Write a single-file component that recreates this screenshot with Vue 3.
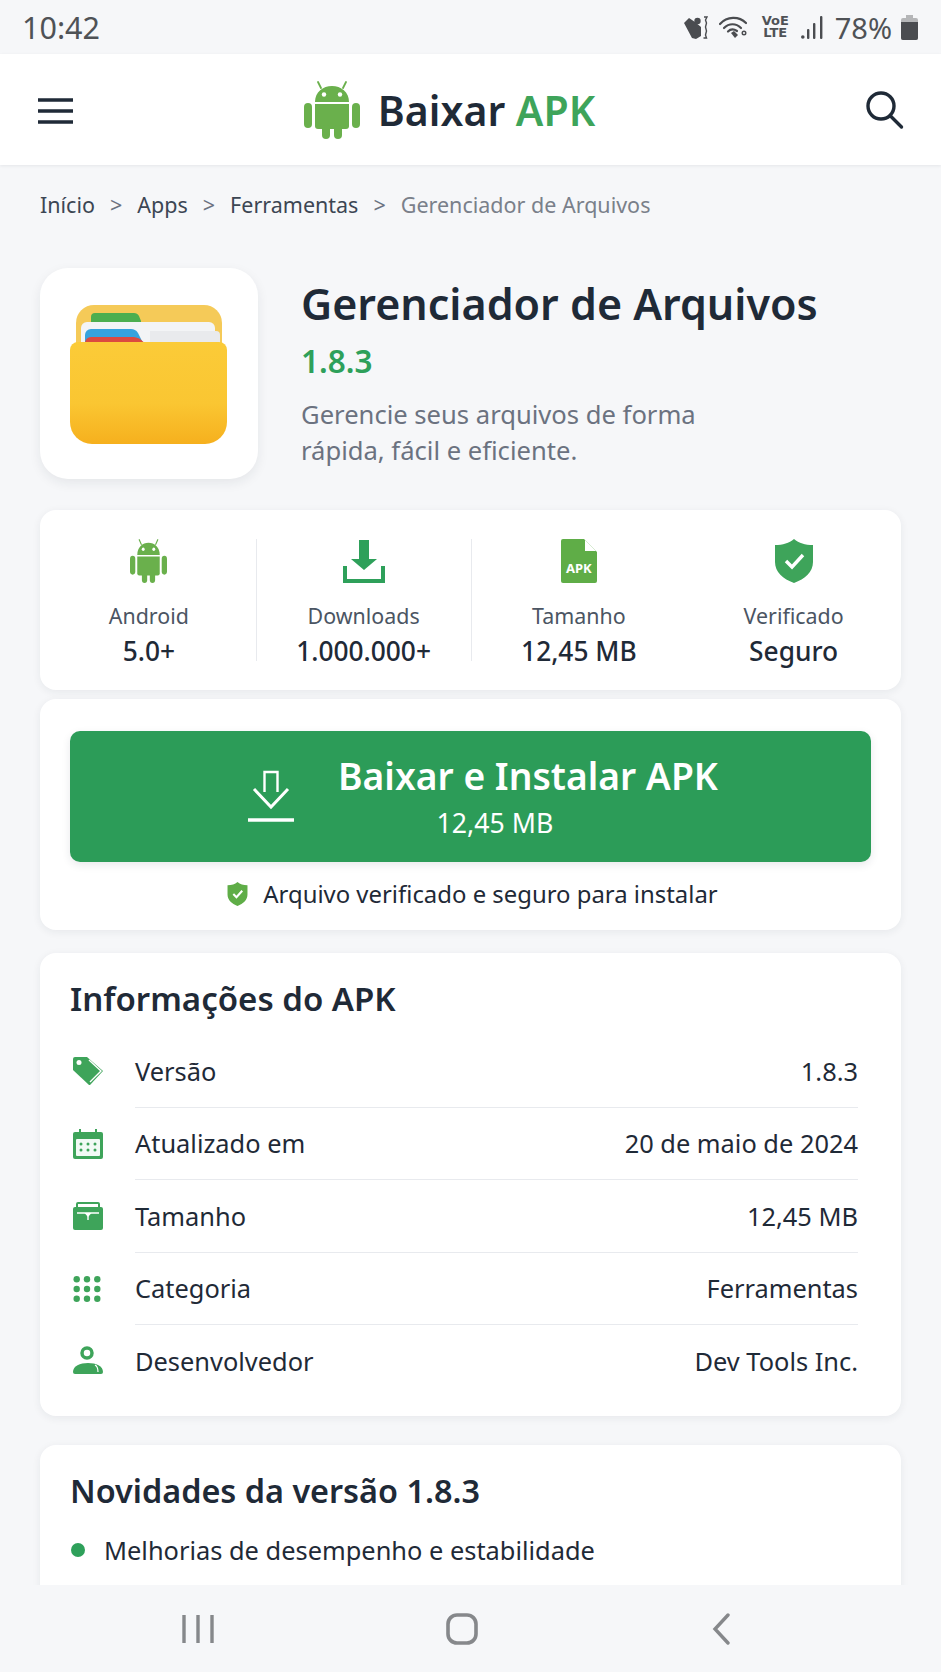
<template>
  <div class="phone">
    <div class="status-bar">
      <span class="clock">10:42</span>
      <div class="status-icons">
        <svg class="st-mute" width="24" height="23" viewBox="0 0 24 23" fill="#4a4c50">
          <path d="M0 7 5 2l6 4 6 5v9l-5 3-4-1z" />
          <circle cx="13.500" cy="5" r="3.200" />
          <path d="M20 1h3l-1.500 3 1 3-1 4 1 4-1 4 1 3h-3" fill="none" stroke="#4a4c50" stroke-width="1.400" />
        </svg>
        <svg class="st-wifi" width="28" height="23" viewBox="0 0 28 23" fill="none" stroke="#4a4c50" stroke-width="2.200" stroke-linecap="round">
          <path d="M1 8C8 0 20 0 27 7" />
          <path d="M5 12c5-5 12-5 17 0" />
          <path d="M9 15.500c2.500-2.500 6-2.500 9-.5" />
          <path d="m12 17 3-2 4 4-3 3z" fill="#4a4c50" stroke="none" />
          <circle cx="25" cy="17" r="1.800" stroke-width="1.400" />
        </svg>
        <span class="volte">VoE<br />LTE</span>
        <svg class="st-signal" width="22" height="23" viewBox="0 0 22 23" fill="#4a4c50">
          <circle cx="1.800" cy="21" r="1.800" />
          <rect x="6" y="13" width="2.400" height="10" rx="1" />
          <rect x="12" y="7" width="2.400" height="16" rx="1" />
          <rect x="19" y="0" width="2.400" height="23" rx="1" />
        </svg>
        <span class="battery-text">78%</span>
        <svg width="17" height="25" viewBox="0 0 17 25">
          <path d="M5 0h7v3h3a2 2 0 0 1 2 2v18a2 2 0 0 1-2 2H2a2 2 0 0 1-2-2V5a2 2 0 0 1 2-2h3z" fill="#b5b6b8" />
          <path d="M0 7h17v16a2 2 0 0 1-2 2H2a2 2 0 0 1-2-2z" fill="#4a4c50" />
        </svg>
      </div>
    </div>

    <header class="top-bar">
      <svg class="menu-icon" width="38" height="28" viewBox="0 0 38 28" fill="none" stroke="#1f2a37" stroke-width="3.400">
        <path d="M1 3h35M1 14h35M1 25h35" />
      </svg>
      <div class="brand">
        <svg width="56" height="58" viewBox="0 0 56 58">
          <use href="#droid" />
        </svg>
        <span class="brand-name">Baixar <b>APK</b></span>
      </div>
      <svg width="40" height="40" viewBox="0 0 40 40" fill="none" stroke="#1f2a37" stroke-width="3.400" stroke-linecap="round">
        <circle cx="17" cy="16" r="13" />
        <path d="m26.500 26 11 11" />
      </svg>
    </header>

    <svg class="defs" width="0" height="0">
      <symbol id="droid" viewBox="0 0 56 58">
        <path d="M17 7 14 1M39 7l3-6" stroke="#6ab04c" stroke-width="1.800" stroke-linecap="round" fill="none" />
        <path d="M11 21C11 11 19 5 28 5s17 6 17 16z" fill="#6ab04c" />
        <circle cx="20" cy="13.500" r="2.200" fill="#fff" />
        <circle cx="36" cy="13.500" r="2.200" fill="#fff" />
        <path d="M11 23h34v22a3 3 0 0 1-3 3H14a3 3 0 0 1-3-3z" fill="#6ab04c" />
        <rect x="0" y="22" width="8" height="25" rx="4" fill="#6ab04c" />
        <rect x="48" y="22" width="8" height="25" rx="4" fill="#6ab04c" />
        <rect x="18" y="44" width="8" height="14" rx="4" fill="#6ab04c" />
        <rect x="30" y="44" width="8" height="14" rx="4" fill="#6ab04c" />
      </symbol>
    </svg>

    <main class="content">
      <nav class="crumbs">
        <span>Início</span><i>&gt;</i><span>Apps</span><i>&gt;</i><span>Ferramentas</span><i>&gt;</i>
        <span class="current">Gerenciador de Arquivos</span>
      </nav>

      <section class="app-head">
        <div class="app-icon">
          <svg class="folder" width="157" height="139" viewBox="0 0 157 139">
            <defs>
              <linearGradient id="folder" x1="0" y1="0" x2="0" y2="1">
                <stop offset="0" stop-color="#fbcb38" />
                <stop offset="0.6" stop-color="#fac632" />
                <stop offset="1" stop-color="#f6b01e" />
              </linearGradient>
            </defs>
            <path d="M6 40V18A18 18 0 0 1 24 0h110a18 18 0 0 1 18 18v22z" fill="#f5ca58" />
            <path d="M21 30V12a4 4 0 0 1 4-4h39c2 0 4 1 5 3l2 5v14z" fill="#4cae4f" />
            <path d="M11 40V23a6 6 0 0 1 6-6h122a6 6 0 0 1 6 6v17z" fill="#f3f4f6" />
            <path d="M80 40V26h66a4 4 0 0 1 4 4v10z" fill="#e9eaed" />
            <path d="M15 40V30a6 6 0 0 1 6-6h40c3 0 5 1 7 4l6 12z" fill="#36a3dd" />
            <path d="M15 40v-2a6 6 0 0 1 6-6h42c3 0 5 1 7 2l7 6z" fill="#dc4a3f" />
            <path d="M0 45a8 8 0 0 1 8-8h141a8 8 0 0 1 8 8v72a22 22 0 0 1-22 22H22A22 22 0 0 1 0 117z" fill="url(#folder)" />
          </svg>
        </div>
        <div class="app-meta">
          <h1>Gerenciador de Arquivos</h1>
          <div class="app-version">1.8.3</div>
          <p>Gerencie seus arquivos de forma<br />rápida, fácil e eficiente.</p>
        </div>
      </section>

      <section class="card stats">
        <div class="stat">
          <svg width="37" height="44" viewBox="0 0 56 58" preserveAspectRatio="none"><use href="#droid" /></svg>
          <span class="stat-label">Android</span>
          <strong>5.0+</strong>
        </div>
        <div class="stat">
          <svg width="42" height="44" viewBox="0 0 42 44">
            <path d="M16 1h10v19h8L21 31 8 20h8z" fill="#2ea05a" />
            <path d="M2 27v15h38V27" fill="none" stroke="#2ea05a" stroke-width="4" />
          </svg>
          <span class="stat-label">Downloads</span>
          <strong>1.000.000+</strong>
        </div>
        <div class="stat">
          <div class="file-icon">
            <svg width="36" height="44" viewBox="0 0 36 44">
              <path d="M2 0h21l13 13v29a2 2 0 0 1-2 2H2a2 2 0 0 1-2-2V2a2 2 0 0 1 2-2z" fill="#5fad47" />
              <path d="M24 1v11h11z" fill="#fff" />
            </svg>
            <span>APK</span>
          </div>
          <span class="stat-label">Tamanho</span>
          <strong>12,45 MB</strong>
        </div>
        <div class="stat">
          <svg width="40" height="44" viewBox="0 0 40 44">
            <path d="M20 0c5 4 11 6 19 6v17c0 10-8 17-19 21C9 40 1 33 1 23V6c8 0 14-2 19-6z" fill="#3ea45a" />
            <path d="m12 22 6 6 11-12" fill="none" stroke="#fff" stroke-width="3.400" />
          </svg>
          <span class="stat-label">Verificado</span>
          <strong>Seguro</strong>
        </div>
      </section>

      <section class="card download">
        <button class="download-btn">
          <svg width="46" height="54" viewBox="0 0 46 54" fill="none" stroke="#fff" stroke-width="3">
            <path d="M16.500 22V2h13v20" stroke-width="2.400" />
            <path d="M6 19 23 37 40 19" />
            <path d="M0 50h46" stroke-width="3.600" />
          </svg>
          <span class="btn-text">
            <span class="btn-title">Baixar e Instalar APK</span>
            <span class="btn-size">12,45 MB</span>
          </span>
        </button>
        <div class="verified">
          <svg width="21" height="24" viewBox="0 0 40 44" preserveAspectRatio="none">
            <path d="M20 0c5 4 11 6 19 6v17c0 10-8 17-19 21C9 40 1 33 1 23V6c8 0 14-2 19-6z" fill="#5fad47" />
            <path d="m12 22 6 6 11-12" fill="none" stroke="#fff" stroke-width="4" />
          </svg>
          Arquivo verificado e seguro para instalar
        </div>
      </section>

      <section class="card info">
        <h2>Informações do APK</h2>
        <div class="info-row" v-for="row in rows" :key="row.label">
          <span class="info-icon" v-html="row.icon"></span>
          <div class="info-line">
            <span>{{ row.label }}</span>
            <span>{{ row.value }}</span>
          </div>
        </div>
      </section>

      <section class="card news">
        <h2>Novidades da versão 1.8.3</h2>
        <ul>
          <li>Melhorias de desempenho e estabilidade</li>
        </ul>
      </section>
    </main>

    <footer class="nav-bar">
      <svg width="34" height="30" viewBox="0 0 34 30" stroke="#86888b" stroke-width="3.400">
        <path d="M2 1v28M16 1v28M30 1v28" />
      </svg>
      <svg width="32" height="32" viewBox="0 0 32 32" fill="none" stroke="#86888b" stroke-width="3.600">
        <rect x="2" y="2" width="28" height="28" rx="9" />
      </svg>
      <svg class="back-icon" width="20" height="32" viewBox="0 0 20 32" fill="none" stroke="#86888b" stroke-width="3.400" stroke-linecap="round">
        <path d="M18 2 5 16l13 14" />
      </svg>
    </footer>
  </div>
</template>

<script setup>
const rows = [
  {
    label: 'Versão',
    value: '1.8.3',
    icon: '<svg width="30" height="28" viewBox="0 0 30 28"><path d="M0 2a2 2 0 0 1 2-2h12l16 14-13 14h-1L0 13z" fill="#3ea45a"/><circle cx="6" cy="5.500" r="2.500" fill="#fff"/><path d="m16 3 12 11-11 11" fill="none" stroke="#fff" stroke-width="1.400"/></svg>'
  },
  {
    label: 'Atualizado em',
    value: '20 de maio de 2024',
    icon: '<svg width="30" height="30" viewBox="0 0 30 30"><path d="M2 3h26a2 2 0 0 1 2 2v23a2 2 0 0 1-2 2H2a2 2 0 0 1-2-2V5a2 2 0 0 1 2-2z" fill="#3ea45a"/><rect x="3" y="10" width="24" height="17" rx="1" fill="#f2faf5"/><path d="M7 0v7M23 0v7" stroke="#3ea45a" stroke-width="2"/><g fill="#3ea45a"><circle cx="8" cy="15" r="1.500"/><circle cx="15" cy="15" r="1.500"/><circle cx="22" cy="15" r="1.500"/><circle cx="8" cy="21" r="1.500"/><circle cx="15" cy="21" r="1.500"/><circle cx="22" cy="21" r="1.500"/></g></svg>'
  },
  {
    label: 'Tamanho',
    value: '12,45 MB',
    icon: '<svg width="30" height="28" viewBox="0 0 30 28"><path d="M4 6V2a1 1 0 0 1 1-1h20a1 1 0 0 1 1 1v4" fill="none" stroke="#3ea45a" stroke-width="2"/><path d="M2 5h26a2 2 0 0 1 2 2v19a2 2 0 0 1-2 2H2a2 2 0 0 1-2-2V7a2 2 0 0 1 2-2z" fill="#3ea45a"/><path d="M4 11h22M15 11v7" stroke="#fff" stroke-width="1.400"/><path d="M11.500 11h7l-3.500 4z" fill="#fff"/></svg>'
  },
  {
    label: 'Categoria',
    value: 'Ferramentas',
    icon: '<svg width="28" height="26" viewBox="0 0 28 26" fill="#3ea45a"><circle cx="3.700" cy="3.300" r="3.200"/><circle cx="14" cy="3.300" r="3.200"/><circle cx="24.300" cy="3.300" r="3.200"/><circle cx="3.700" cy="13" r="3.200"/><circle cx="14" cy="13" r="3.200"/><circle cx="24.300" cy="13" r="3.200"/><circle cx="3.700" cy="22.700" r="3.200"/><circle cx="14" cy="22.700" r="3.200"/><circle cx="24.300" cy="22.700" r="3.200"/></svg>'
  },
  {
    label: 'Desenvolvedor',
    value: 'Dev Tools Inc.',
    icon: '<svg width="30" height="29" viewBox="0 0 30 29"><circle cx="14" cy="7" r="5" fill="none" stroke="#3ea45a" stroke-width="3.500"/><path d="M0 26c0-6 7-9 15-9s15 3 15 9a2 2 0 0 1-2 2H2a2 2 0 0 1-2-2z" fill="#3ea45a"/><path d="M22 19c2 1 3 3 3 7" fill="none" stroke="#fff" stroke-width="1.200"/></svg>'
  }
]
</script>

<style>
body {
  background: #f6f7f9;
}
</style>

<style scoped>
.phone {
  width: 941px;
  height: 1672px;
  display: flex;
  flex-direction: column;
  overflow: hidden;
  background: #f6f7f9;
  font-family: "Noto Sans", "Open Sans", sans-serif;
  color: #1f2a37;
}

.defs {
  position: absolute;
}

.status-bar {
  height: 54px;
  flex: none;
  display: flex;
  align-items: center;
  justify-content: space-between;
  padding: 0 23px 0 22px;
  box-sizing: border-box;
  color: #4f5256;
}

.clock {
  font-size: 30.500px;
}

.status-icons {
  display: flex;
  align-items: center;
}

.st-mute {
  margin-right: 11px;
}

.st-wifi {
  margin-right: 14px;
}

.volte {
  width: 29px;
  margin-right: 11px;
  font-size: 13px;
  font-weight: 700;
  line-height: 12px;
  text-align: center;
  font-family: "DejaVu Sans", sans-serif;
}

.st-signal {
  margin-right: 12px;
}

.battery-text {
  margin-right: 9px;
  font-size: 29px;
  line-height: 1;
}

.top-bar {
  height: 111px;
  flex: none;
  background: #fff;
  display: flex;
  align-items: center;
  justify-content: space-between;
  padding: 0 37px;
  box-sizing: border-box;
  box-shadow: 0 1px 3px rgba(31, 42, 55, 0.08);
  position: relative;
}

.menu-icon {
  margin-top: 2px;
}

.brand {
  display: flex;
  align-items: center;
  gap: 18px;
  margin-right: 40px;
}

.brand-name {
  margin-top: 2px;
  font-size: 41px;
  font-weight: 600;
  line-height: 1;
}

.brand-name b {
  font-weight: 600;
  color: #3ea45a;
}

.content {
  flex: 1;
  min-height: 0;
  overflow: hidden;
  padding: 0 40px;
  display: flex;
  flex-direction: column;
}

.crumbs {
  flex: none;
  height: 79px;
  margin-bottom: 1px;
  display: flex;
  align-items: center;
  font-size: 21.500px;
  color: #3c4653;
}

.crumbs i {
  font-style: normal;
  margin: 0 15px;
  color: #6b7280;
}

.crumbs .current {
  color: #7a808a;
}

.app-head {
  flex: none;
  display: flex;
  gap: 43px;
  margin-top: 23px;
}

.app-icon {
  width: 218px;
  height: 211px;
  background: #fff;
  border-radius: 28px;
  box-shadow: 0 4px 12px rgba(31, 42, 55, 0.08);
  display: flex;
  align-items: center;
  justify-content: center;
}

.folder {
  margin: 2px 2px 0 0;
}

.app-meta {
  white-space: nowrap;
}

.app-meta h1 {
  margin: 8px 0 0;
  font-size: 43px;
  font-weight: 600;
  line-height: 56px;
}

.app-version {
  margin-top: 10px;
  font-size: 31.500px;
  font-weight: 600;
  line-height: 38px;
  color: #2ea05a;
}

.app-meta p {
  margin: 17px 0 0;
  font-size: 25.600px;
  line-height: 36px;
  color: #6b7280;
}

.card {
  flex: none;
  background: #fff;
  border-radius: 16px;
  box-shadow: 0 2px 8px rgba(31, 42, 55, 0.07);
}

.stats {
  margin-top: 31px;
  height: 180px;
  display: grid;
  grid-template-columns: repeat(4, 1fr);
  padding: 29px 0 29px 2px;
  box-sizing: border-box;
}

.stat {
  display: flex;
  flex-direction: column;
  align-items: center;
  border-right: 1px solid #e8eaee;
}

.stat:nth-child(n + 3) {
  border-right: none;
}

.stat-label {
  margin-top: 20px;
  font-size: 21.400px;
  line-height: 26px;
  color: #4b5563;
}

.stat strong {
  margin: 7px 0 -5px;
  font-size: 26.300px;
  font-weight: 500;
  line-height: 30px;
}

.file-icon {
  position: relative;
  height: 44px;
}

.file-icon span {
  position: absolute;
  left: 0;
  right: 0;
  top: 21px;
  text-align: center;
  font-size: 13px;
  line-height: 16px;
  font-weight: 700;
  color: #fff;
}

.download {
  margin-top: 9px;
  height: 231px;
  padding: 32px 30px 0;
  box-sizing: border-box;
}

.download-btn {
  width: 100%;
  height: 131px;
  border: none;
  border-radius: 10px;
  background: #2c9c58;
  color: #fff;
  font-family: inherit;
  display: flex;
  align-items: center;
  gap: 44px;
  padding: 0 0 0 178px;
  box-shadow: 0 3px 8px rgba(31, 42, 55, 0.1);
}

.btn-text {
  display: flex;
  flex-direction: column;
  align-items: center;
}

.btn-title {
  font-size: 37.250px;
  font-weight: 600;
  line-height: 44px;
}

.btn-size {
  margin: 8px 66px 0 0;
  font-size: 26.700px;
  line-height: 34px;
}

.verified {
  margin: 16px 0 0 4px;
  display: flex;
  align-items: center;
  justify-content: center;
  gap: 15px;
  font-size: 23.900px;
  line-height: 32px;
}

.info {
  margin-top: 23px;
  padding: 24px 43px 19px 30px;
}

.card h2 {
  margin: 0;
  font-size: 33px;
  font-weight: 600;
  line-height: 44px;
}

.info h2 {
  margin-bottom: 14px;
}

.info-row {
  display: flex;
  align-items: center;
  gap: 32px;
}

.info-icon {
  width: 30px;
  margin-left: 3px;
  display: flex;
  justify-content: flex-start;
}

.info-line {
  flex: 1;
  height: 71.500px;
  display: flex;
  align-items: center;
  justify-content: space-between;
  border-bottom: 1px solid #e8eaee;
  font-size: 25.400px;
}

.info-row:last-child .info-line {
  border-bottom: none;
}

.news {
  margin-top: 29px;
  padding: 23px 30px 60px;
}

.news h2 {
  font-size: 32.400px;
}

.news ul {
  margin: 21px 0 0;
  padding: 0;
  list-style: none;
}

.news li {
  display: flex;
  align-items: center;
  gap: 19px;
  font-size: 25.400px;
  line-height: 34px;
}

.news li::before {
  content: "";
  width: 14px;
  height: 14px;
  margin-left: 1px;
  border-radius: 50%;
  background: #2ea05a;
}

.nav-bar {
  height: 87px;
  flex: none;
  background: #f6f7f9;
  display: flex;
  align-items: center;
  gap: 230px;
  padding: 0 0 0 182px;
  box-sizing: border-box;
}

.back-icon {
  margin-left: 2px;
}
</style>
